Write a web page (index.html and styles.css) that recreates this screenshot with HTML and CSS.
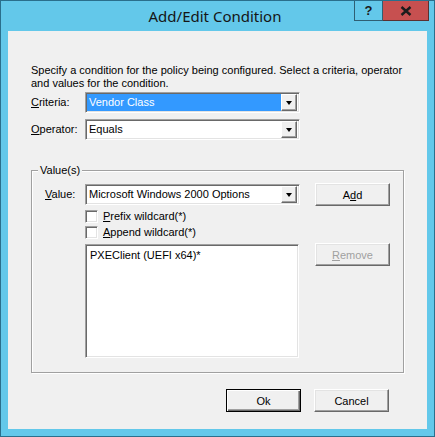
FILE: index.html
```html
<!DOCTYPE html>
<html lang="en">
<head>
  <meta charset="UTF-8">
  <title>Add/Edit Condition</title>
  <link rel="stylesheet" href="styles.css">
</head>
<body>
<div class="window">
  <div class="titlebar">
    <div></div>
    <div class="title">Add/Edit Condition</div>
    <div class="caption-btns">
      <span class="cap-btn help">?</span>
      <span class="cap-btn close">
        <svg width="12" height="10" viewBox="0 0 12 10"><path d="M1.5 1 L10.5 9 M10.5 1 L1.5 9" stroke="#1c1c1c" stroke-width="2.4"/></svg>
      </span>
    </div>
  </div>

  <div class="client">
    <p class="intro">Specify a condition for the policy being configured. Select a criteria, operator<br>and values for the condition.</p>

    <div class="row">
      <label class="lbl"><u>C</u>riteria:</label>
      <div class="combo selected"><span class="combo-text">Vendor Class</span><span class="drop"><i></i></span></div>
    </div>
    <div class="row row-op">
      <label class="lbl"><u>O</u>perator:</label>
      <div class="combo"><span class="combo-text">Equals</span><span class="drop"><i></i></span></div>
    </div>

    <fieldset class="group">
      <legend>Value(s)</legend>
      <div class="group-body">
        <div class="row">
          <label class="lbl lbl-value"><u>V</u>alue:</label>
          <div class="combo"><span class="combo-text">Microsoft Windows 2000 Options</span><span class="drop"><i></i></span></div>
          <button class="btn side-btn">A<u>d</u>d</button>
        </div>
        <label class="check"><span class="box"></span><span><u>P</u>refix wildcard(*)</span></label>
        <label class="check check-2"><span class="box"></span><span><u>A</u>ppend wildcard(*)</span></label>
        <div class="row row-list">
          <div class="listbox">
            <div class="item">PXEClient (UEFI x64)*</div>
          </div>
          <button class="btn side-btn disabled"><u>R</u>emove</button>
        </div>
      </div>
    </fieldset>

    <div class="actions">
      <button class="btn default">Ok</button>
      <button class="btn">Cancel</button>
    </div>
  </div>
</div>
</body>
</html>
```

FILE: styles.css
```css
/* dialog window */
body {
  margin: 0;
  background: #fff;
}

.window {
  width: 435px;
  height: 437px;
  box-sizing: border-box;
  background: #63c8ea;
  border: 1px solid #2a6f8c;
  overflow: hidden;
}

.titlebar {
  height: 30px;
  display: grid;
  grid-template-columns: 1fr auto 1fr;
  align-items: start;
  padding-right: 5px;
}

.title {
  font-family: "Noto Sans", sans-serif;
  font-size: 15px;
  color: #151515;
  line-height: 20px;
  margin-top: 5px;
}

.caption-btns {
  display: flex;
  justify-content: flex-end;
  margin-top: -1px;
}

.cap-btn {
  height: 21px;
  box-sizing: border-box;
  display: flex;
  align-items: center;
  justify-content: center;
  border: 1px solid #2f5f73;
}

.help {
  width: 29px;
  font-family: "Liberation Sans", sans-serif;
  font-weight: bold;
  font-size: 13px;
  color: #1a1a1a;
}

.close {
  width: 46px;
  background: #c75050;
  border-left: none;
  border-color: #5b3030;
}

/* client area */
.client {
  margin-left: 7px;
  width: 419px;
  height: 398px;
  background: #f0f0f0;
  box-sizing: border-box;
  padding: 33px 0 0 23px;
  font-family: "Liberation Sans", Arial, sans-serif;
  font-size: 11px;
  line-height: 13px;
  color: #000;
}

.intro {
  margin: 0 0 2px 0;
  white-space: nowrap;
}

.row {
  display: flex;
  align-items: center;
}

.row-op {
  margin-top: 6px;
}

.lbl {
  width: 54px;
}

.lbl-value {
  width: 40px;
}

/* sunken 3d border, classic style */
.combo,
.listbox,
.box {
  background: #fff;
  border: 1px solid;
  border-color: #a0a0a0 #fff #fff #a0a0a0;
  box-shadow: inset 1px 1px 0 #696969, inset -1px -1px 0 #e3e3e3;
  box-sizing: border-box;
}

.combo {
  width: 215px;
  height: 21px;
  display: flex;
  align-items: center;
  padding: 1px 2px 1px 1px;
}

.combo-text {
  flex: 1;
  height: 17px;
  line-height: 17px;
  padding-left: 2px;
  white-space: nowrap;
  overflow: hidden;
}

.selected .combo-text {
  background: #3399ff;
  color: #fff;
}

.drop {
  width: 16px;
  height: 17px;
  box-sizing: border-box;
  background: #f0f0f0;
  border: 1px solid;
  border-color: #fff #696969 #696969 #fff;
  box-shadow: inset -1px -1px 0 #a0a0a0;
  display: flex;
  align-items: center;
  justify-content: center;
}

.drop i {
  width: 0;
  height: 0;
  border-left: 3.5px solid transparent;
  border-right: 3.5px solid transparent;
  border-top: 4px solid #000;
  margin-top: 1px;
}

/* group box */
.group {
  margin: 24px 0 0 0;
  padding: 0;
  width: 373px;
  height: 209px;
  box-sizing: border-box;
  border: 1px solid #a0a0a0;
  box-shadow: inset 1px 1px 0 #fff, 1px 1px 0 #fff;
  min-width: 0;
}

.group legend {
  margin-left: 6px;
  padding: 0 2px;
  background: #f0f0f0;
}

.group-body {
  padding: 6px 0 0 13px;
}

.side-btn {
  margin-left: 15px;
}

.check {
  display: flex;
  align-items: center;
  margin: 4px 0 0 40px;
  height: 13px;
}

.check-2 {
  margin-top: 3px;
}

.box {
  width: 13px;
  height: 13px;
  margin-right: 5px;
}

.row-list {
  align-items: flex-start;
  margin-top: 5px;
  padding-left: 40px;
}

.listbox {
  width: 214px;
  height: 114px;
  padding: 4px 4px;
}

.side-btn.disabled {
  margin-left: 16px;
  margin-top: -1px;
}

/* buttons */
.btn {
  width: 75px;
  height: 23px;
  box-sizing: border-box;
  padding: 0;
  font-family: inherit;
  font-size: 11px;
  color: #000;
  background: #f0f0f0;
  border: 1px solid;
  border-color: #fff #696969 #696969 #fff;
  box-shadow: inset -1px -1px 0 #a0a0a0, inset 1px 1px 0 #e3e3e3;
}

.btn.disabled {
  color: #a0a0a0;
}

.btn.default {
  border: 1px solid #000;
  box-shadow: inset 1px 1px 0 #fff, inset -1px -1px 0 #696969, inset -2px -2px 0 #a0a0a0;
}

.actions {
  display: flex;
  justify-content: flex-end;
  gap: 13px;
  margin-top: 16px;
  padding-right: 38px;
}
```
